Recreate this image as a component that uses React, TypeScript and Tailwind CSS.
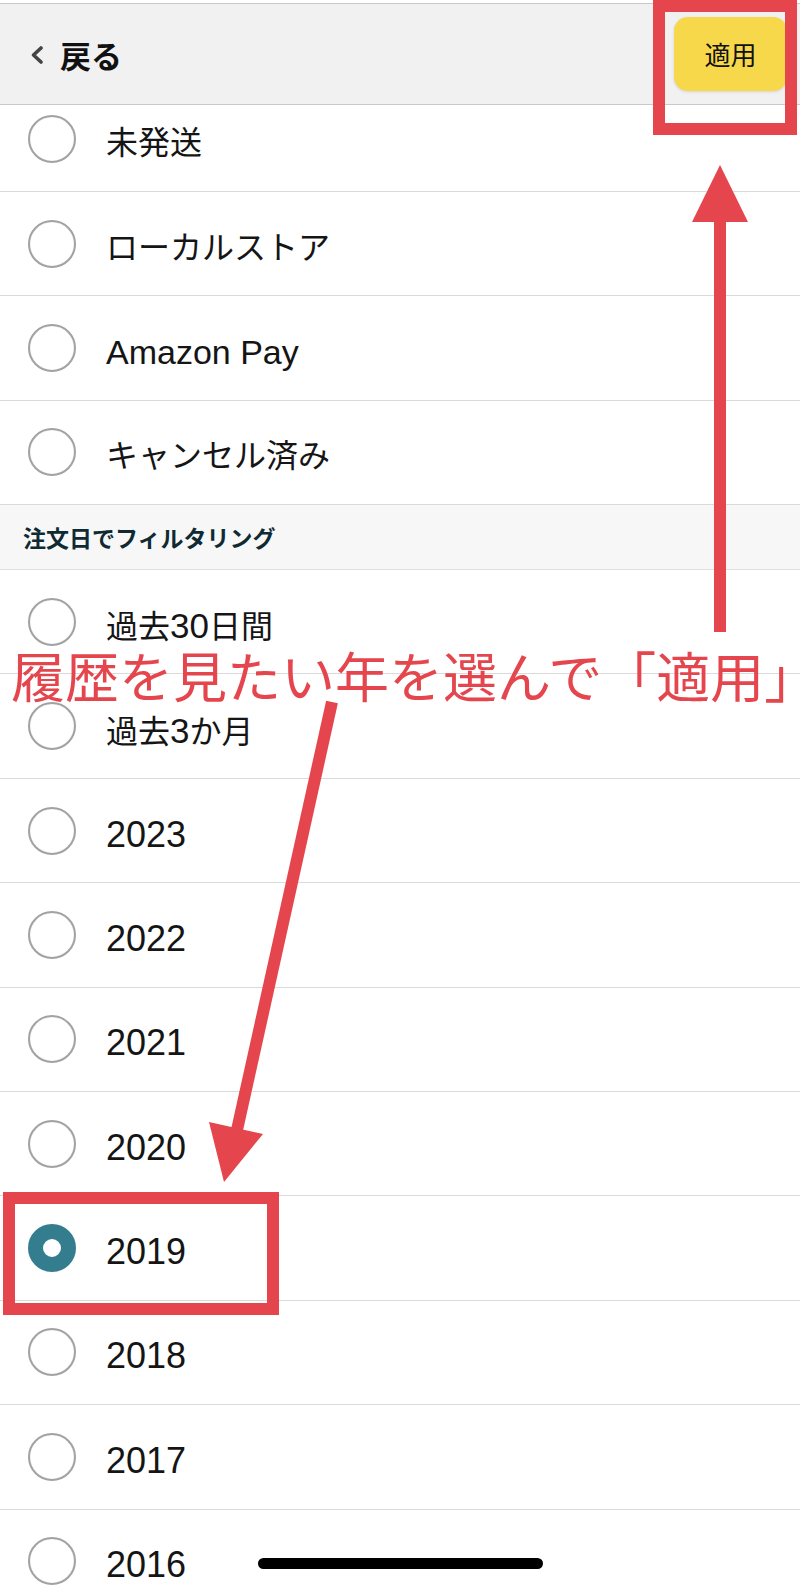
import React from "react";

const RED = "#e5454d";

type RowProps = { label: React.ReactNode; selected?: boolean; size: string };

function Radio({ selected }: { selected?: boolean }) {
  if (selected) {
    return (
      <div className="w-[48px] h-[48px] rounded-full border-[15px] border-[#347d8f] bg-white shrink-0" />
    );
  }
  return (
    <div className="w-[48px] h-[48px] rounded-full border-[2px] border-[#a2a2a2] bg-white shrink-0 shadow-[inset_0_0_1px_rgba(0,0,0,0.15)]" />
  );
}

function Row({ label, selected, size }: RowProps) {
  return (
    <div className="h-[104.4px] border-b border-[#dadada] bg-white flex items-center">
      <div className="ml-[28px]">
        <Radio selected={selected} />
      </div>
      <span
        className={`ml-[30px] pt-[8px] text-[#151515] leading-none ${size}`}
        style={{ fontFamily: '"Liberation Sans", "Noto Sans CJK JP", sans-serif' }}
      >
        {label}
      </span>
    </div>
  );
}

export default function App() {
  const cjk = "text-[32px]";
  const year = "text-[36px]";
  return (
    <div
      className="relative w-[800px] h-[1586px] overflow-hidden bg-white"
      style={{ fontFamily: '"Noto Sans CJK JP", sans-serif' }}
    >
      <div className="flex flex-col h-full">
        {/* top strip */}
        <div className="h-[3px] bg-white shrink-0" />
        {/* header */}
        <div className="relative z-10 h-[102px] shrink-0 bg-[#f1f1f1] border-t border-b border-[#c9c9c9] flex items-center justify-between pl-[30px] pr-[13px]">
          <div className="flex items-center">
            <svg width="14" height="18" viewBox="0 0 14 18" className="mt-[1px]">
              <polyline
                points="11,2 3.5,9 11,16"
                fill="none"
                stroke="#444"
                strokeWidth="3.6"
                strokeLinecap="round"
                strokeLinejoin="round"
              />
            </svg>
            <span className="ml-[16px] text-[31px] font-bold text-[#111] leading-none">戻る</span>
          </div>
          <button className="w-[113px] h-[74px] rounded-[14px] bg-[#f7d84b] shadow-[0_1px_3px_rgba(0,0,0,0.12)] flex items-center justify-center text-[26px] text-[#111] leading-none">
            適用
          </button>
        </div>
        {/* list */}
        <div className="flex-1 overflow-hidden">
          <div className="-mt-[17.5px]">
            <Row label="未発送" size={cjk} />
            <Row label="ローカルストア" size={cjk} />
            <Row label="Amazon Pay" size="text-[34px]" />
            <Row label="キャンセル済み" size={cjk} />
            <div className="h-[65px] bg-[#f7f7f7] border-b border-[#dedede] flex items-center pl-[23px]">
              <span className="text-[23px] font-bold text-[#0f2a32] leading-none">注文日でフィルタリング</span>
            </div>
            <Row
              label={
                <>
                  過去<span className="text-[35px]">30</span>日間
                </>
              }
              size={cjk}
            />
            <Row
              label={
                <>
                  過去<span className="text-[35px]">3</span>か月
                </>
              }
              size={cjk}
            />
            <Row label="2023" size={year} />
            <Row label="2022" size={year} />
            <Row label="2021" size={year} />
            <Row label="2020" size={year} />
            <Row label="2019" size={year} selected />
            <Row label="2018" size={year} />
            <Row label="2017" size={year} />
            <Row label="2016" size={year} />
          </div>
        </div>
      </div>

      {/* annotations */}
      <div
        className="absolute left-[653px] top-0 w-[144px] h-[135px] border-[12px] z-20 pointer-events-none"
        style={{ borderColor: RED }}
      />
      <div
        className="absolute left-[3px] top-[1192px] w-[276px] h-[123px] border-[12px] z-20 pointer-events-none"
        style={{ borderColor: RED }}
      />
      <svg
        className="absolute left-0 top-0 z-20 pointer-events-none"
        width="800"
        height="1586"
        viewBox="0 0 800 1586"
      >
        <rect x="714" y="220" width="12" height="412" fill={RED} />
        <polygon points="720,165 692,222 748,222" fill={RED} />
        <line x1="332" y1="702" x2="237" y2="1130" stroke={RED} strokeWidth="12" />
        <polygon points="224,1182 263,1134 209,1122" fill={RED} />
      </svg>
      <div
        className="absolute left-[11px] top-[648px] z-20 text-[54px] leading-none whitespace-nowrap pointer-events-none"
        style={{ color: RED, fontFamily: '"Noto Sans CJK JP", sans-serif' }}
      >
        履歴を見たい年を選んで「適用」
      </div>

      {/* home indicator */}
      <div className="absolute left-[258px] top-[1558px] w-[285px] h-[11px] rounded-full bg-black z-20" />
    </div>
  );
}
